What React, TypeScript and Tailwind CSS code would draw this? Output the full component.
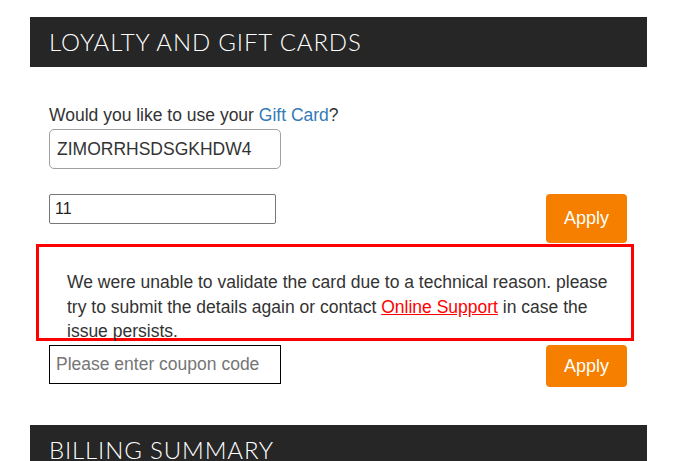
import React from "react";

export default function App() {
  return (
    <div className="min-h-[461px] w-[697px] bg-white overflow-hidden" style={{ fontFamily: '"Liberation Sans", Arial, sans-serif' }}>
      <div className="ml-[30px] mt-[17px] w-[617px]">
        <div className="flex h-[50px] items-center bg-[#262626] px-[19px]">
          <h2 className="text-[24px] font-light tracking-[0.85px] text-white" style={{ fontFamily: 'Lato, "Open Sans", sans-serif' }}>
            LOYALTY AND GIFT CARDS
          </h2>
        </div>
        <div className="pl-[19px] pr-[20px] pt-[38px]">
          <p className="text-[17.5px] leading-[20px] text-[#333]">
            Would you like to use your <a className="text-[#337ab7]">Gift Card</a>?
          </p>
          <input
            readOnly
            value="ZIMORRHSDSGKHDW4"
            className="mt-[4px] block h-[40px] w-[232px] rounded-[5px] border border-[#a0a0a0] px-[7px] text-[17.5px] text-[#333] outline-none"
          />
          <div className="mt-[25px] flex items-start justify-between">
            <input
              readOnly
              value="11"
              className="block h-[30px] w-[227px] rounded-[2px] border border-[#767676] px-[5px] text-[16px] text-[#222] outline-none"
            />
            <button className="h-[49px] w-[81px] rounded-[4px] bg-[#f77f00] text-[18px] text-white">Apply</button>
          </div>
          <div className="-ml-[13px] mt-[1px] h-[97px] w-[598px] border-[3px] border-[#ff0000] pl-[28px] pr-[12px] pt-[23px] text-[17.5px] leading-[24.5px] text-[#333]">
            We were unable to validate the card due to a technical reason. please try to submit the details again or contact{" "}
            <a className="text-[#ff0000] underline">Online Support</a> in case the issue persists.
          </div>
          <div className="mt-[4px] flex items-start justify-between">
            <input
              readOnly
              placeholder="Please enter coupon code"
              className="block h-[39px] w-[232px] border border-black px-[6px] text-[17.5px] text-[#333] placeholder:text-[#757575] outline-none"
            />
            <button className="h-[42px] w-[81px] rounded-[4px] bg-[#f77f00] text-[18px] text-white">Apply</button>
          </div>
        </div>
        <div className="mt-[38px] flex h-[50px] items-center bg-[#262626] px-[19px]">
          <h2 className="text-[24px] font-light tracking-[0.85px] text-white" style={{ fontFamily: 'Lato, "Open Sans", sans-serif' }}>
            BILLING SUMMARY
          </h2>
        </div>
      </div>
    </div>
  );
}
